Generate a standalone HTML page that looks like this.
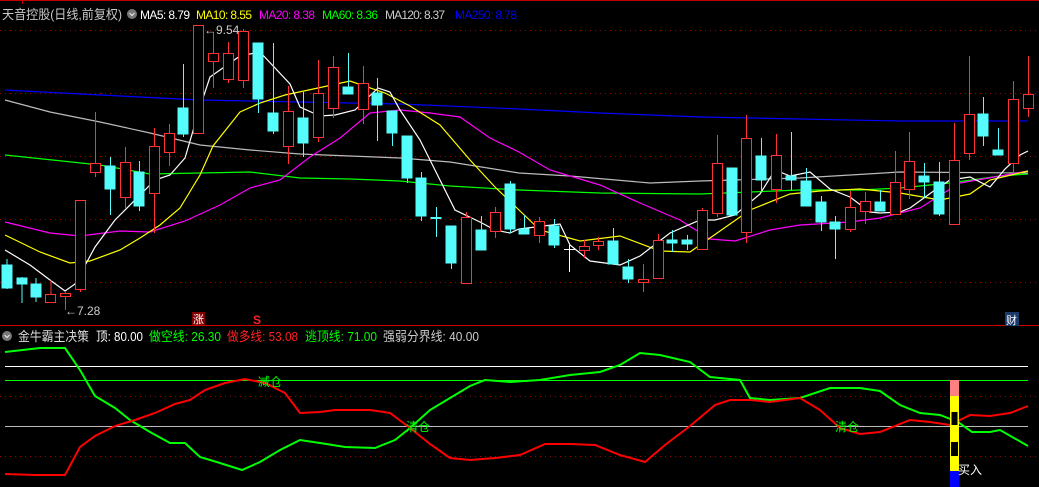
<!DOCTYPE html>
<html><head><meta charset="utf-8"><style>
html,body{margin:0;padding:0;background:#000;width:1039px;height:487px;overflow:hidden}
svg{display:block}
text{font-family:"Liberation Sans","Noto Sans CJK SC",sans-serif}
</style></head><body>
<svg width="1039" height="487" viewBox="0 0 1039 487" xmlns="http://www.w3.org/2000/svg">
<rect width="1039" height="487" fill="#000"/>
<line x1="0" y1="0.5" x2="1039" y2="0.5" stroke="#c00000"/>
<line x1="22.5" y1="0" x2="22.5" y2="4" stroke="#c00000"/>
<g stroke="#a00000" stroke-dasharray="1 4">
<line x1="0" y1="30.5" x2="1039" y2="30.5"/><line x1="0" y1="93.5" x2="1039" y2="93.5"/>
<line x1="0" y1="156.5" x2="1039" y2="156.5"/><line x1="0" y1="219.5" x2="1039" y2="219.5"/>
<line x1="0" y1="282.5" x2="1039" y2="282.5"/>
<line x1="0" y1="396.5" x2="1039" y2="396.5"/><line x1="0" y1="456.5" x2="1039" y2="456.5"/>
</g>
<line x1="0" y1="325.5" x2="1039" y2="325.5" stroke="#d00000"/>

<text x="2" y="19" font-size="13" fill="#c8c8c8" textLength="120" lengthAdjust="spacingAndGlyphs">天音控股(日线,前复权)</text>
<circle cx="132" cy="14" r="5" fill="#777"/><path d="M129.5 13l2.5 2.5 2.5-2.5" stroke="#eee" fill="none"/>
<g font-size="12">
<text x="140" y="19" fill="#fff" textLength="50">MA5: 8.79</text>
<text x="196" y="19" fill="#ff0" textLength="56">MA10: 8.55</text>
<text x="259" y="19" fill="#f0f" textLength="56">MA20: 8.38</text>
<text x="322" y="19" fill="#0f0" textLength="56">MA60: 8.36</text>
<text x="385" y="19" fill="#ccc" textLength="60">MA120: 8.37</text>
<text x="455" y="19" fill="#00f" textLength="62">MA250: 8.78</text>
</g>

<g fill="none" stroke-width="1.2">
<polyline stroke="#0000ff" points="5,90 100,95 200,100 300,102 400,104 519,109 600,113 700,117 800,119 900,121 1028,121"/>
<polyline stroke="#bbbbbb" points="5,100 50,112 100,122 150,133 200,145 250,150 300,154 350,156 400,158 450,162 519,173 570,176 650,183 700,181 800,178 900,172 1028,173"/>
<polyline stroke="#00ff00" points="5,155 100,165 150,174 200,173 250,172 300,178 350,179 400,181 450,186 519,190 600,193 700,194 800,190 860,190 900,188 950,183 1000,176 1028,174"/>
<polyline stroke="#ff00ff" points="5,222 50,233 80,236 120,231 150,232 185,221 220,205 250,188 280,180 310,157 340,138 370,113 400,110 430,113 460,117 490,138 519,152 550,170 600,185 640,203 680,220 710,239 735,241 770,230 800,225 850,222 880,218 920,208 960,183 1000,176 1028,171"/>
<polyline stroke="#ffff00" points="5,235 40,252 70,263 90,261 120,250 140,238 160,225 180,208 200,175 213,146 240,112 260,103 285,95 318,88 350,81 385,93 410,106 440,125 470,160 495,187 519,210 540,230 580,241 620,236 660,251 690,252 720,231 750,210 790,194 820,191 860,189 900,193 940,200 970,194 990,180 1028,171"/>
<polyline stroke="#ffffff" points="5,250 30,265 50,280 65,291 75,284 95,247 115,220 135,200 155,180 170,175 185,158 200,107 210,77 240,56 260,52 290,84 300,107 320,116 335,115 355,110 378,88 390,92 400,110 420,140 440,180 455,210 480,222 495,230 510,233 519,229 560,224 570,245 590,261 620,265 640,256 670,233 700,220 715,220 735,215 760,194 775,170 790,176 810,172 830,189 850,197 870,212 880,213 900,212 910,208 935,190 950,180 970,177 990,187 1005,169 1020,155 1028,151"/>
</g>

<g stroke="#54fcfc" fill="#54fcfc">
<line x1="7" y1="259" x2="7" y2="289"/><rect x="2" y="265" width="10" height="23"/>
<line x1="22" y1="277" x2="22" y2="303"/><rect x="17" y="278" width="10" height="6"/>
<line x1="36" y1="278" x2="36" y2="302"/><rect x="31" y="284" width="10" height="13"/>
<line x1="110.5" y1="157" x2="110.5" y2="215"/><rect x="105" y="166" width="10" height="23"/>
<line x1="139.5" y1="161" x2="139.5" y2="211"/><rect x="134" y="172" width="10" height="34"/>
<line x1="183.5" y1="64" x2="183.5" y2="137"/><rect x="178" y="108" width="10" height="26"/>
<line x1="258.5" y1="43" x2="258.5" y2="113"/><rect x="253" y="43" width="10" height="56"/>
<line x1="273.5" y1="43" x2="273.5" y2="134"/><rect x="268" y="113" width="10" height="18"/>
<line x1="303.5" y1="92" x2="303.5" y2="157"/><rect x="298" y="118" width="10" height="25"/>
<line x1="348.5" y1="53" x2="348.5" y2="94"/><rect x="343" y="87" width="10" height="7"/>
<line x1="377.5" y1="78" x2="377.5" y2="141"/><rect x="372" y="93" width="10" height="12"/>
<line x1="392.5" y1="111" x2="392.5" y2="146"/><rect x="387" y="111" width="10" height="22"/>
<line x1="407.5" y1="136" x2="407.5" y2="183"/><rect x="402" y="136" width="10" height="42"/>
<line x1="421.5" y1="172" x2="421.5" y2="221"/><rect x="416" y="178" width="10" height="38"/>
<line x1="436.5" y1="207" x2="436.5" y2="237"/><rect x="431" y="217.5" width="10" height="1"/>
<line x1="451.5" y1="226" x2="451.5" y2="269"/><rect x="446" y="226" width="10" height="37"/>
<line x1="481.5" y1="216" x2="481.5" y2="250"/><rect x="476" y="230" width="10" height="20"/>
<line x1="510.5" y1="181" x2="510.5" y2="233"/><rect x="505" y="184" width="10" height="45"/>
<line x1="524.5" y1="215" x2="524.5" y2="234"/><rect x="519" y="229" width="10" height="5"/>
<line x1="554.5" y1="219" x2="554.5" y2="248"/><rect x="549" y="226" width="10" height="19"/>
<line x1="613.5" y1="228" x2="613.5" y2="265"/><rect x="608" y="241" width="10" height="23"/>
<line x1="628.5" y1="259" x2="628.5" y2="283"/><rect x="623" y="267" width="10" height="12"/>
<line x1="672.5" y1="230" x2="672.5" y2="252"/><rect x="667" y="240" width="10" height="3"/>
<line x1="687.5" y1="235" x2="687.5" y2="250"/><rect x="682" y="240" width="10" height="4"/>
<line x1="732.5" y1="168" x2="732.5" y2="215"/><rect x="727" y="168" width="10" height="47"/>
<line x1="761.5" y1="138" x2="761.5" y2="192"/><rect x="756" y="156" width="10" height="24"/>
<line x1="791.5" y1="132" x2="791.5" y2="190"/><rect x="786" y="176" width="10" height="4"/>
<line x1="806.5" y1="168" x2="806.5" y2="206"/><rect x="801" y="181" width="10" height="25"/>
<line x1="821.5" y1="196" x2="821.5" y2="231"/><rect x="816" y="202" width="10" height="20"/>
<line x1="835.5" y1="216" x2="835.5" y2="259"/><rect x="830" y="222" width="10" height="7"/>
<line x1="880.5" y1="190" x2="880.5" y2="211"/><rect x="875" y="202" width="10" height="9"/>
<line x1="924.5" y1="163" x2="924.5" y2="198"/><rect x="919" y="176" width="10" height="6"/>
<line x1="939.5" y1="162" x2="939.5" y2="216"/><rect x="934" y="182" width="10" height="32"/>
<line x1="983.5" y1="97" x2="983.5" y2="146"/><rect x="978" y="114" width="10" height="22"/>
<line x1="998.5" y1="128" x2="998.5" y2="155"/><rect x="993" y="150" width="10" height="5"/>
</g>
<g stroke="#fff"><line x1="569.5" y1="245" x2="569.5" y2="272"/><line x1="564" y1="249.5" x2="575" y2="249.5"/></g>
<g stroke="#ff3333" fill="#000">
<line x1="51" y1="280" x2="51" y2="294"/><rect x="45.5" y="294.5" width="10" height="8"/>
<line x1="65.5" y1="292" x2="65.5" y2="310"/><rect x="60.5" y="293.5" width="10" height="3"/>
<line x1="80.5" y1="289" x2="80.5" y2="292"/><rect x="75.5" y="200.5" width="10" height="89"/>
<line x1="95.5" y1="112" x2="95.5" y2="177"/><rect x="90.5" y="163.5" width="10" height="9"/>
<line x1="125.5" y1="147" x2="125.5" y2="208"/><rect x="120.5" y="162.5" width="10" height="35"/>
<line x1="154.5" y1="128" x2="154.5" y2="233"/><rect x="149.5" y="146.5" width="10" height="47"/>
<line x1="169.5" y1="124" x2="169.5" y2="166"/><rect x="164.5" y="133.5" width="10" height="19"/>
<rect x="193.5" y="25.5" width="10" height="108"/>
<line x1="213.5" y1="32" x2="213.5" y2="88"/><rect x="208.5" y="53.5" width="10" height="8"/>
<line x1="228.5" y1="42" x2="228.5" y2="83"/><rect x="223.5" y="53.5" width="10" height="26"/>
<line x1="243.5" y1="29" x2="243.5" y2="88"/><rect x="238.5" y="31.5" width="10" height="49"/>
<line x1="288.5" y1="86" x2="288.5" y2="164"/><rect x="283.5" y="111.5" width="10" height="35"/>
<line x1="318.5" y1="60" x2="318.5" y2="142"/><rect x="313.5" y="93.5" width="10" height="44"/>
<line x1="333.5" y1="56" x2="333.5" y2="118"/><rect x="328.5" y="67.5" width="10" height="41"/>
<line x1="363.5" y1="66" x2="363.5" y2="124"/><rect x="358.5" y="83.5" width="10" height="26"/>
<line x1="466.5" y1="212" x2="466.5" y2="284"/><rect x="461.5" y="217.5" width="10" height="66"/>
<line x1="495.5" y1="207" x2="495.5" y2="238"/><rect x="490.5" y="212.5" width="10" height="19"/>
<line x1="539.5" y1="217" x2="539.5" y2="243"/><rect x="534.5" y="221.5" width="10" height="14"/>
<line x1="584.5" y1="240" x2="584.5" y2="258"/><rect x="579.5" y="246.5" width="10" height="4"/>
<line x1="598.5" y1="237" x2="598.5" y2="250"/><rect x="593.5" y="241.5" width="10" height="4"/>
<line x1="643.5" y1="264" x2="643.5" y2="292"/><rect x="638.5" y="279.5" width="10" height="3"/>
<line x1="658.5" y1="234" x2="658.5" y2="279"/><rect x="653.5" y="240.5" width="10" height="38"/>
<line x1="702.5" y1="208" x2="702.5" y2="250"/><rect x="697.5" y="210.5" width="10" height="39"/>
<line x1="717.5" y1="135" x2="717.5" y2="217"/><rect x="712.5" y="163.5" width="10" height="50"/>
<line x1="746.5" y1="115" x2="746.5" y2="243"/><rect x="741.5" y="138.5" width="10" height="94"/>
<line x1="776.5" y1="134" x2="776.5" y2="203"/><rect x="771.5" y="155.5" width="10" height="34"/>
<line x1="850.5" y1="191" x2="850.5" y2="232"/><rect x="845.5" y="207.5" width="10" height="22"/>
<line x1="865.5" y1="192" x2="865.5" y2="224"/><rect x="860.5" y="201.5" width="10" height="10"/>
<line x1="895.5" y1="151" x2="895.5" y2="214"/><rect x="890.5" y="182.5" width="10" height="32"/>
<line x1="909.5" y1="132" x2="909.5" y2="199"/><rect x="904.5" y="161.5" width="10" height="28"/>
<line x1="954.5" y1="123" x2="954.5" y2="224"/><rect x="949.5" y="160.5" width="10" height="64"/>
<line x1="969.5" y1="56" x2="969.5" y2="160"/><rect x="964.5" y="114.5" width="10" height="39"/>
<line x1="1013.5" y1="81" x2="1013.5" y2="172"/><rect x="1008.5" y="99.5" width="10" height="64"/>
<line x1="1028.5" y1="56" x2="1028.5" y2="117"/><rect x="1023.5" y="94.5" width="10" height="14"/>
</g>

<text x="204" y="34" font-size="12" fill="#ccc">←9.54</text>
<text x="65" y="315" font-size="12" fill="#ccc">←7.28</text>
<rect x="192" y="312" width="13" height="13" fill="#800000"/>
<text x="193" y="323" font-size="11" fill="#fff">涨</text>
<text x="253" y="324" font-size="12" font-weight="bold" fill="#ff2020">S</text>
<rect x="1005" y="312" width="14" height="14" fill="#1a3a6a"/>
<text x="1006" y="324" font-size="11" fill="#fff">财</text>

<circle cx="7" cy="336" r="5" fill="#777"/><path d="M4.5 335l2.5 2.5 2.5-2.5" stroke="#eee" fill="none"/>
<g font-size="13">
<text x="18" y="341" fill="#ddd" textLength="71" lengthAdjust="spacingAndGlyphs">金牛霸主决策</text>
<text x="96" y="341" fill="#fff" textLength="47" lengthAdjust="spacingAndGlyphs">顶: 80.00</text>
<text x="149" y="341" fill="#0f0" textLength="72" lengthAdjust="spacingAndGlyphs">做空线: 26.30</text>
<text x="227" y="341" fill="#ff2020" textLength="71" lengthAdjust="spacingAndGlyphs">做多线: 53.08</text>
<text x="305" y="341" fill="#0f0" textLength="72" lengthAdjust="spacingAndGlyphs">逃顶线: 71.00</text>
<text x="383" y="341" fill="#ccc" textLength="96" lengthAdjust="spacingAndGlyphs">强弱分界线: 40.00</text>
</g>
<line x1="5" y1="366.5" x2="1028" y2="366.5" stroke="#fff"/>
<line x1="5" y1="380.5" x2="1028" y2="380.5" stroke="#0f0"/>
<line x1="5" y1="426.5" x2="1028" y2="426.5" stroke="#bbb"/>

<polyline fill="none" stroke="#0f0" stroke-width="2" points="5,352 40,348 65,348 80,370 95,396 115,408 130,420 150,432 170,443 185,443 200,457 220,463 242,470 260,462 280,450 300,440 320,443 345,447 375,448 395,440 410,428 430,410 450,398 470,386 485,380 510,382 540,380 570,375 600,372 620,365 640,353 660,355 690,362 710,377 740,380 750,398 770,400 800,398 830,388 860,388 880,391 900,405 920,413 940,415 958,422 972,432 990,432 1000,430 1028,446"/>
<polyline fill="none" stroke="#f00" stroke-width="2" points="5,474 35,475 65,475 80,447 95,436 115,426 135,420 155,413 175,404 190,400 205,390 225,383 245,379 265,383 285,393 300,413 320,412 335,410 370,410 390,413 410,428 430,444 450,458 470,460 495,458 520,455 545,444 570,444 595,445 620,455 645,462 665,445 690,426 715,405 730,400 750,400 770,402 800,398 820,410 840,428 860,434 880,432 910,420 930,422 950,425 970,415 990,416 1010,413 1028,406"/>
<g font-size="12" fill="#0f0">
<text x="258" y="386">减仓</text>
<text x="406" y="431">清仓</text>
<text x="835" y="431">清仓</text>
</g>
<rect x="950" y="380" width="9" height="16" fill="#ff8080"/>
<rect x="950" y="396" width="9" height="75" fill="#ff0"/>
<rect x="951" y="411.5" width="7" height="14" fill="#000" stroke="#ff0"/>
<rect x="950.5" y="441.5" width="8" height="15" fill="#000" stroke="#ff0"/>
<rect x="950" y="471" width="9" height="16" fill="#0000ff"/>
<text x="958" y="474" font-size="12" fill="#fff">买入</text>
</svg>
</body></html>
